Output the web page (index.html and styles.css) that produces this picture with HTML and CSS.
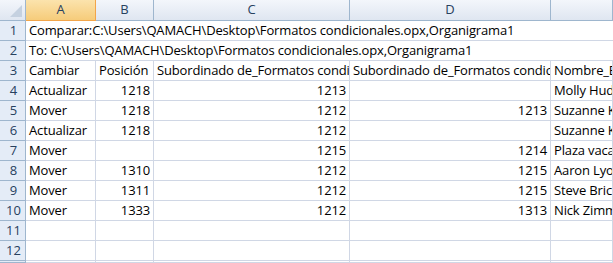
FILE: index.html
```html
<!DOCTYPE html>
<html>
<head>
<meta charset="utf-8">
<link rel="stylesheet" href="styles.css">
</head>
<body>
<div class="sheet">
  <div class="hd corner"><span class="tri"></span></div>
  <div class="hd col sel">A</div>
  <div class="hd col">B</div>
  <div class="hd col">C</div>
  <div class="hd col">D</div>
  <div class="hd col"></div>

  <div class="hd rn">1</div>
  <div class="c ov span5">Comparar:C:\Users\QAMACH\Desktop\Formatos condicionales.opx,Organigrama1</div>

  <div class="hd rn">2</div>
  <div class="c ov span5">To: C:\Users\QAMACH\Desktop\Formatos condicionales.opx,Organigrama1</div>

  <div class="hd rn">3</div>
  <div class="c">Cambiar</div><div class="c">Posición</div><div class="c">Subordinado de_Formatos condicionales</div><div class="c">Subordinado de_Formatos condicionales</div><div class="c">Nombre_Empleado</div>

  <div class="hd rn">4</div>
  <div class="c">Actualizar</div><div class="c n">1218</div><div class="c n">1213</div><div class="c n"></div><div class="c">Molly Hudson</div>

  <div class="hd rn">5</div>
  <div class="c">Mover</div><div class="c n">1218</div><div class="c n">1212</div><div class="c n">1213</div><div class="c">Suzanne Kelly</div>

  <div class="hd rn">6</div>
  <div class="c">Actualizar</div><div class="c n">1218</div><div class="c n">1212</div><div class="c n"></div><div class="c">Suzanne Kelly</div>

  <div class="hd rn">7</div>
  <div class="c">Mover</div><div class="c n"></div><div class="c n">1215</div><div class="c n">1214</div><div class="c">Plaza vacante</div>

  <div class="hd rn">8</div>
  <div class="c">Mover</div><div class="c n">1310</div><div class="c n">1212</div><div class="c n">1215</div><div class="c">Aaron Lyon</div>

  <div class="hd rn">9</div>
  <div class="c">Mover</div><div class="c n">1311</div><div class="c n">1212</div><div class="c n">1215</div><div class="c">Steve Bricker</div>

  <div class="hd rn">10</div>
  <div class="c">Mover</div><div class="c n">1333</div><div class="c n">1212</div><div class="c n">1313</div><div class="c">Nick Zimmerman</div>

  <div class="hd rn">11</div>
  <div class="c"></div><div class="c"></div><div class="c"></div><div class="c"></div><div class="c"></div>

  <div class="hd rn">12</div>
  <div class="c"></div><div class="c"></div><div class="c"></div><div class="c"></div><div class="c"></div>

  <div class="hd rn"></div>
  <div class="c"></div><div class="c"></div><div class="c"></div><div class="c"></div><div class="c"></div>
</div>
</body>
</html>
```

FILE: styles.css
```css
html, body {
  margin: 0;
  padding: 0;
  background: #ffffff;
  overflow: hidden;
}
.sheet {
  display: grid;
  grid-template-columns: 26px 70px 58px 196px 201px 1fr;
  grid-template-rows: 21px repeat(12, 20px) 2px;
  width: 613px;
  height: 263px;
  overflow: hidden;
  font-family: "Open Sans", "Liberation Sans", sans-serif;
  font-size: 13px;
  letter-spacing: -0.15px;
  color: #000;
}
.sheet > div {
  box-sizing: border-box;
  white-space: nowrap;
  overflow: hidden;
  line-height: 19px;
}
.hd {
  background: linear-gradient(#f3f6fb, #dfe6f1);
  border-right: 1px solid #9eb6ce;
  border-bottom: 1px solid #9eb6ce;
  color: #27415f;
  text-align: center;
  letter-spacing: 0;
}
.col {
  line-height: 20px;
}
.col.sel {
  background: linear-gradient(#fbe3ad, #f6cc7b);
  border-right-color: #f2a54a;
  border-bottom-color: #f2a54a;
}
.corner {
  position: relative;
}
.tri {
  position: absolute;
  right: 3px;
  bottom: 3px;
  width: 0;
  height: 0;
  border-left: 12px solid transparent;
  border-bottom: 12px solid #c5d1e0;
}
.rn {
  background: #e4ecf7;
  text-align: center;
  padding-left: 2px;
}
.c {
  border-right: 1px solid #d0d7e5;
  border-bottom: 1px solid #d0d7e5;
  padding: 0 3px;
}
.c.n {
  text-align: right;
}
.ov {
  overflow: visible !important;
  position: relative;
  z-index: 1;
  background: transparent;
  border-right: none !important;
}
.span5 {
  grid-column: span 5;
}
```
